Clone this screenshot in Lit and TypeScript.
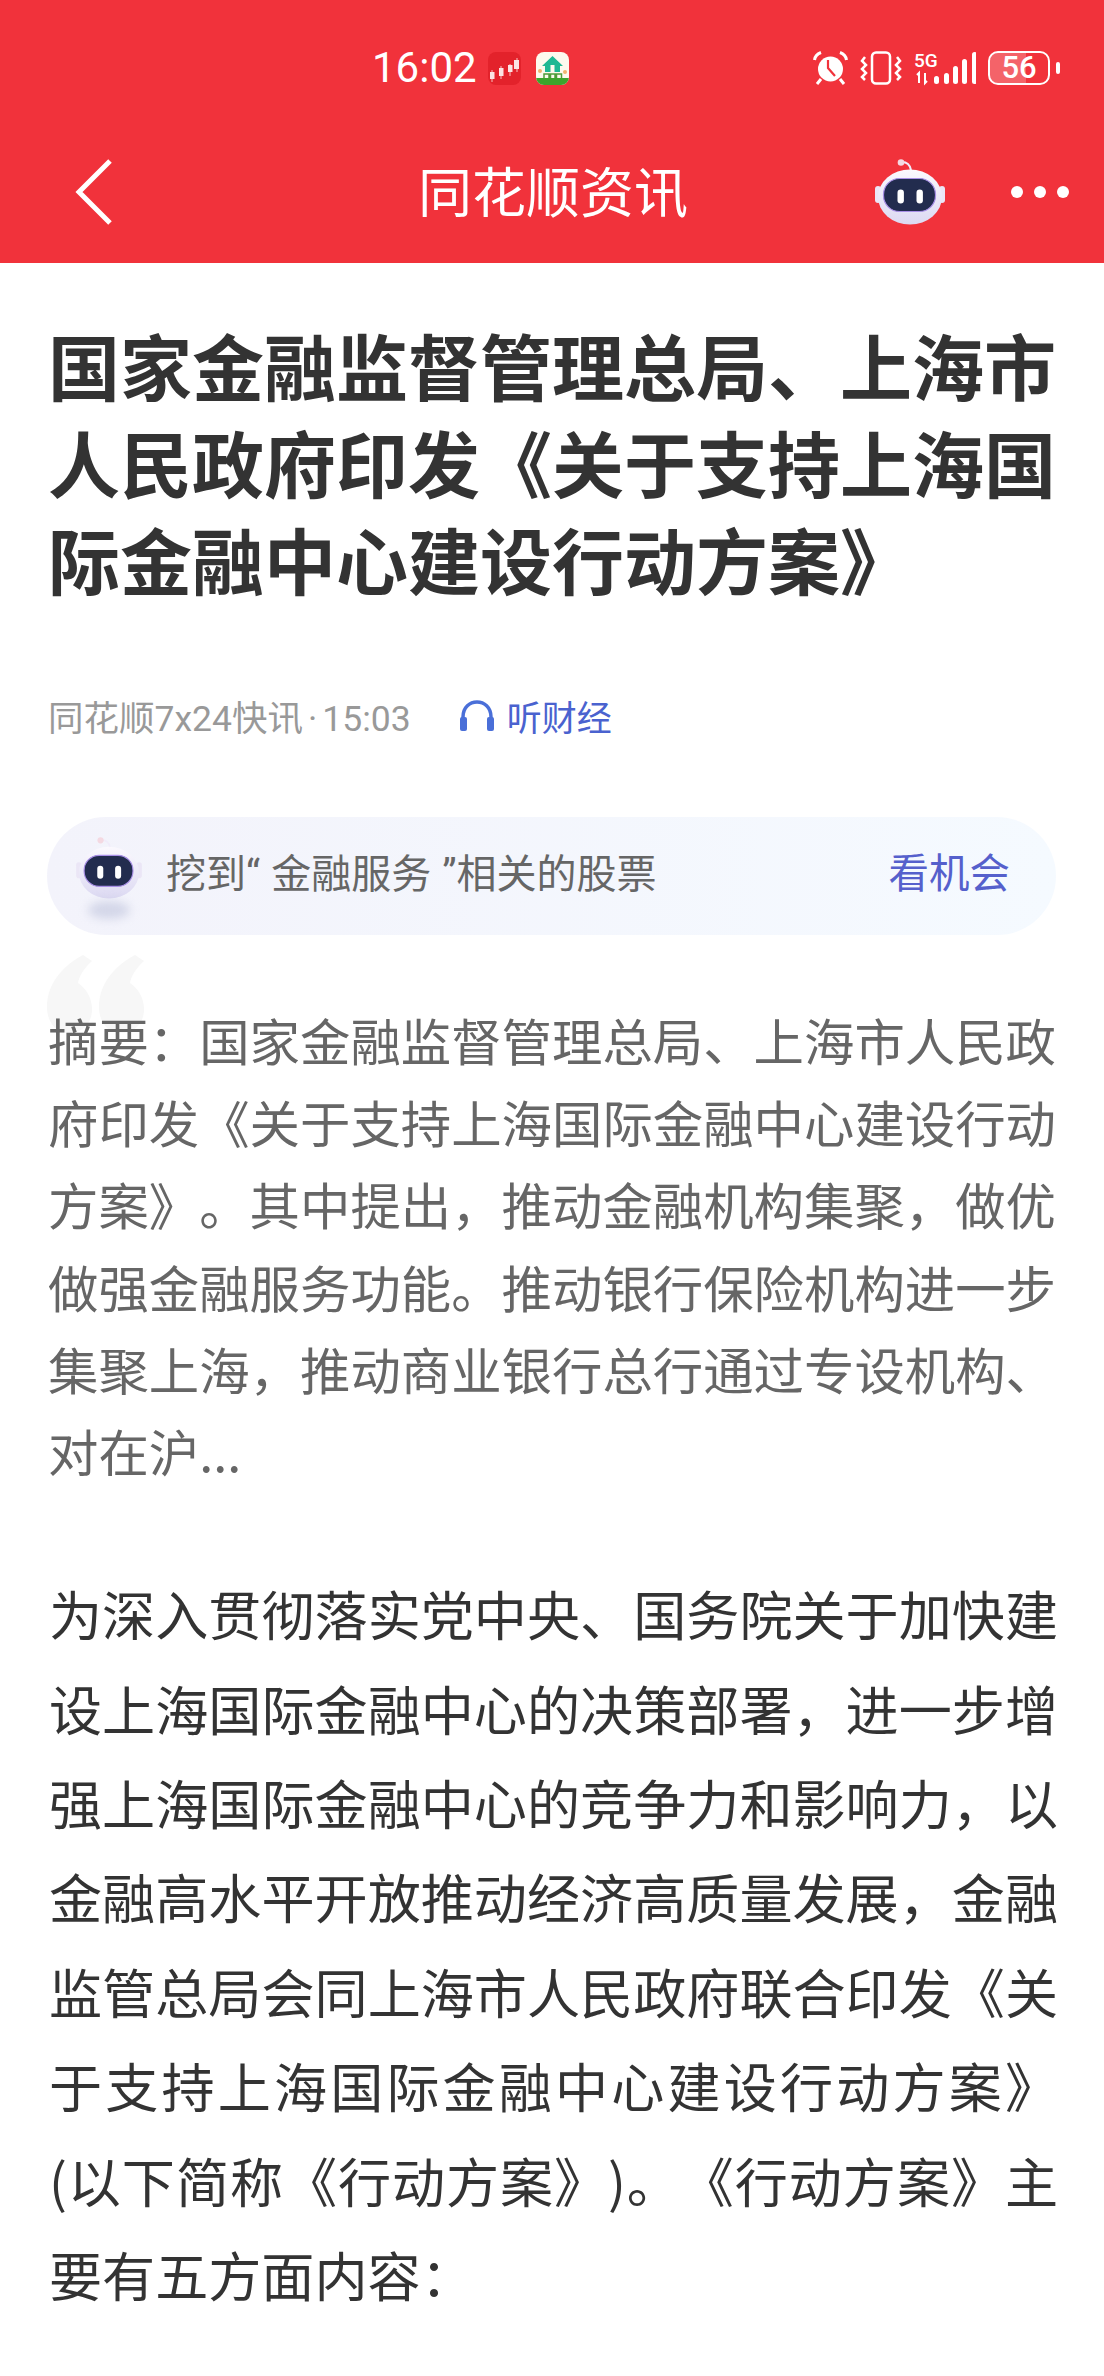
import { LitElement, html, css, svg } from 'lit'
import { customElement } from 'lit/decorators.js'

// robot mascot used in the nav bar and in the stock pill
const robot = (w: number, h: number) => html`<svg width=${w} height=${h} viewBox="0 0 70 66">
  <defs>
    <linearGradient id="shell" x1="0" y1="0" x2="0" y2="1">
      <stop offset="0" stop-color="#fbf9fe" />
      <stop offset="1" stop-color="#dcd9f2" />
    </linearGradient>
  </defs>
  <path d="M27 3 C32 3 35 6 36 11" fill="none" stroke="#f1ecfa" stroke-width="2" />
  <circle cx="26" cy="3.5" r="3.3" fill="#f4d9e2" />
  <rect x="0" y="27" width="6" height="17" rx="3" fill="#ebe6f6" />
  <rect x="64" y="27" width="6" height="17" rx="3" fill="#ebe6f6" />
  <ellipse cx="35" cy="38" rx="32" ry="27.5" fill="url(#shell)" />
  <rect x="8.5" y="19.5" width="52" height="33" rx="16" fill="#222c4e" stroke="#a88fe6" stroke-width="1.2" />
  <rect x="22.5" y="30.5" width="6.4" height="14" rx="3.2" fill="#fff" />
  <rect x="41.5" y="30.5" width="6.4" height="14" rx="3.2" fill="#fff" />
</svg>`

const signalBars = [
  [20, 24, 8],
  [30, 21, 11],
  [39, 14, 18],
  [48, 7, 25],
  [58, 0, 32],
]

const headlineLines = ['国家金融监督管理总局、上海市', '人民政府印发《关于支持上海国', '际金融中心建设行动方案》']

const summaryLines = [
  '摘要：国家金融监督管理总局、上海市人民政',
  '府印发《关于支持上海国际金融中心建设行动',
  '方案》。其中提出，推动金融机构集聚，做优',
  '做强金融服务功能。推动银行保险机构进一步',
  '集聚上海，推动商业银行总行通过专设机构、',
  '对在沪...',
]

const bodyLines = [
  '为深入贯彻落实党中央、国务院关于加快建',
  '设上海国际金融中心的决策部署，进一步增',
  '强上海国际金融中心的竞争力和影响力，以',
  '金融高水平开放推动经济高质量发展，金融',
  '监管总局会同上海市人民政府联合印发《关',
  '于支持上海国际金融中心建设行动方案》',
  '(以下简称《行动方案》)。《行动方案》主',
  '要有五方面内容：',
]

const lines = (items: string[]) => items.map((l) => html`<span class="line">${l}</span>`)

@customElement('app-root')
export class AppRoot extends LitElement {
  static styles = css`
    :host {
      display: block;
      width: 1104px;
      min-height: 2376px;
      background: #fff;
      font-family: 'Noto Sans CJK SC', sans-serif;
      text-spacing-trim: space-all;
    }
    .line {
      display: block;
      white-space: nowrap;
      text-align-last: justify;
    }
    .line:last-child {
      text-align-last: left;
    }
    .top {
      background: #f1323b;
      color: #fff;
      height: 263px;
    }
    .status {
      height: 104px;
      padding-top: 16px;
      display: flex;
      align-items: center;
    }
    .time {
      margin-left: 372px;
      width: 116px;
      font: 400 42px/1 Roboto, sans-serif;
    }
    .app-icon {
      width: 33px;
      height: 33px;
      border-radius: 8px;
      margin-right: 15px;
      display: block;
    }
    .status-right {
      margin-left: auto;
      margin-right: 44px;
      display: flex;
      align-items: center;
      gap: 12px;
    }
    .battery {
      position: relative;
      width: 62px;
      height: 34px;
      border: 2.5px solid #fff;
      border-radius: 10px;
      box-sizing: border-box;
      text-align: center;
      font: 500 31px/29px Roboto, sans-serif;
    }
    .battery i {
      position: absolute;
      left: 0;
      top: 0;
      bottom: 0;
      width: 62%;
      border-radius: 7px 0 0 7px;
      background: rgba(255, 255, 255, 0.24);
    }
    .battery span {
      position: relative;
    }
    .tip {
      width: 4px;
      height: 12px;
      margin-left: -6px;
      border-radius: 2px;
      background: #fff;
    }
    .nav {
      height: 143px;
      display: grid;
      grid-template-columns: 1fr auto 1fr;
      align-items: center;
    }
    .back {
      margin-left: 74px;
      display: block;
    }
    .nav-title {
      font-size: 54px;
      line-height: 1;
      margin: -3px 0 0 2px;
    }
    .nav-right {
      display: flex;
      align-items: center;
      justify-content: flex-end;
      padding-right: 35px;
      gap: 66px;
    }
    .dots {
      display: flex;
      gap: 11px;
    }
    .dots i {
      width: 12px;
      height: 12px;
      border-radius: 50%;
      background: #fff;
    }
    .headline {
      margin: 52px 48px 0;
      font-size: 72px;
      line-height: 97px;
      font-weight: 700;
      color: #333;
    }
    .meta {
      margin: 84px 0 0 48px;
      display: flex;
      align-items: center;
      height: 50px;
      font-family: Roboto, 'Noto Sans CJK SC', sans-serif;
      font-size: 35.5px;
      color: #999;
    }
    .dot {
      padding: 0 5px;
    }
    .listen {
      margin-left: 48px;
      display: flex;
      align-items: center;
      gap: 12px;
      font-size: 35px;
      color: #4a62cf;
    }
    .pill {
      margin: 77px 48px 0 47px;
      height: 118px;
      border-radius: 59px;
      background: linear-gradient(90deg, #f3f3fb, #f5faff);
      display: flex;
      align-items: center;
      padding: 0 46px 0 29px;
      font-family: Roboto, 'Noto Sans CJK SC', sans-serif;
      font-size: 40px;
      color: #666;
    }
    .pill-text {
      margin: -11px 0 0 -2px;
    }
    .q-open {
      padding-right: 11px;
    }
    .q-close {
      padding-left: 11px;
    }
    .pill-robot {
      position: relative;
      display: flex;
      margin: -16px 26px 0 0;
    }
    .pill-robot::after {
      content: '';
      position: absolute;
      left: 12px;
      bottom: -20px;
      width: 42px;
      height: 18px;
      border-radius: 50%;
      background: rgba(190, 195, 220, 0.6);
      filter: blur(5px);
    }
    .pill-action {
      margin: -11px 0 0 auto;
      font-size: 40.5px;
      color: #5560cc;
    }
    .summary {
      position: relative;
      margin: 64px 48px 0;
      font-size: 50.4px;
      line-height: 82.2px;
      color: #666;
    }
    .quote {
      position: absolute;
      left: -1px;
      top: -44px;
      fill: #f7f7f7;
    }
    .summary p {
      position: relative;
      margin: 0;
    }
    .body {
      margin: 74px 46px 0 49px;
      font-size: 53.1px;
      line-height: 94.4px;
      color: #333;
    }
    .signal {
      margin: -2px 0;
    }
  `

  private renderStatus() {
    return html`<div class="status">
      <span class="time">16:02</span>
      <svg class="app-icon" viewBox="0 0 33 33">
        <rect width="33" height="33" fill="#e3222b" />
        <path d="M4 18 V30 M13 14 V27 M22 12 V24 M29 6 V20" stroke="#f3a6a6" stroke-width="1.2" />
        <rect x="2" y="20" width="4.5" height="7" fill="#fbe3e3" />
        <rect x="11" y="16" width="4.5" height="8" fill="#fbe3e3" />
        <rect x="20" y="13" width="4.5" height="7" fill="#fbe3e3" />
        <rect x="26" y="8" width="5" height="9" fill="#fbe3e3" />
      </svg>
      <svg class="app-icon" viewBox="0 0 33 33">
        <rect width="33" height="33" fill="#fdf9ee" />
        <rect y="26" width="33" height="7" fill="#3da42c" />
        <path d="M16.5 4 L27 14 H24 V20 H9 V14 H6 Z" fill="#1fb893" />
        <rect x="14.5" y="13" width="4" height="7" fill="#fdf9ee" />
        <path d="M8 26 V22 H13 V26 M14.5 26 V22 H19 V26 M20.5 26 V22 H25.5 V26" fill="none" stroke="#4f9c3a" stroke-width="1.5" />
        <circle cx="4" cy="19" r="2" fill="#f0b470" />
        <circle cx="29" cy="20" r="2" fill="#f0b470" />
      </svg>
      <div class="status-right">
        <svg width="35" height="34" viewBox="0 0 35 34">
          <circle cx="17.5" cy="18" r="12.5" fill="#fff" />
          <path d="M15 9 V17 L22 25" fill="none" stroke="#f1323b" stroke-width="2.2" />
          <path d="M1.5 9 C2 5 4 3 8 1.5 M33.5 9 C33 5 31 3 27 1.5 M8 28 L4 33 M27 28 L31 33" fill="none" stroke="#fff" stroke-width="3" />
        </svg>
        <svg width="42" height="34" viewBox="0 0 42 34" fill="none" stroke="#fff" stroke-width="2.5">
          <rect x="12" y="1.5" width="18" height="31" rx="4" />
          <path d="M5 6 L2 10 L6 14 L2 18 L6 22 L2 26 L5 29" />
          <path d="M37 6 L40 10 L36 14 L40 18 L36 22 L40 26 L37 29" />
        </svg>
        <svg class="signal" width="62" height="38" viewBox="0 -2 62 38">
          <text x="0" y="16" font-family="Roboto" font-size="19" font-weight="500" fill="#fff">5G</text>
          <path d="M3 24 L5 22 V32 M11 22 V32 L13 30" fill="none" stroke="#fff" stroke-width="2" />
          ${signalBars.map(([x, y, h]) => svg`<rect x=${x} y=${y + 1} width="5" height=${h} rx="2.5" fill="#fff" />`)}
        </svg>
        <div class="battery"><i></i><span>56</span></div>
        <div class="tip"></div>
      </div>
    </div>`
  }

  private renderNav() {
    return html`<div class="nav">
      <svg class="back" width="40" height="68" viewBox="0 0 40 68">
        <path d="M36 3 L5 34 L36 65" fill="none" stroke="#fff" stroke-width="5" />
      </svg>
      <div class="nav-title">同花顺资讯</div>
      <div class="nav-right">
        ${robot(70, 66)}
        <div class="dots"><i></i><i></i><i></i></div>
      </div>
    </div>`
  }

  render() {
    return html`
      <div class="top">${this.renderStatus()} ${this.renderNav()}</div>
      <div class="headline">${lines(headlineLines)}</div>
      <div class="meta">
        <span>同花顺7x24快讯<span class="dot">·</span>15:03</span>
        <span class="listen">
          <svg width="36" height="32" viewBox="0 0 36 32">
            <path d="M4 30 V18 C4 -2 32 -2 32 18 V30" fill="none" stroke="#4a6fd8" stroke-width="3.5" />
            <rect x="1" y="18" width="7" height="14" rx="2" fill="#4a6fd8" />
            <rect x="28" y="18" width="7" height="14" rx="2" fill="#4a6fd8" />
          </svg>
          听财经
        </span>
      </div>
      <div class="pill">
        <span class="pill-robot">${robot(66, 62)}</span>
        <span class="pill-text">挖到<span class="q-open">“</span>金融服务<span class="q-close">”</span>相关的股票</span>
        <span class="pill-action">看机会</span>
      </div>
      <div class="summary">
        <svg class="quote" width="97" height="78" viewBox="0 0 97 78">
          <path d="M36 0 L45 6 C36 14 32 22 31 28 C40 34 45 44 45 54 C45 68 36 78 22 78 C8 78 0 66 0 52 C0 30 14 12 36 0 Z" />
          <path transform="translate(52 0)" d="M36 0 L45 6 C36 14 32 22 31 28 C40 34 45 44 45 54 C45 68 36 78 22 78 C8 78 0 66 0 52 C0 30 14 12 36 0 Z" />
        </svg>
        <p>${lines(summaryLines)}</p>
      </div>
      <div class="body">${lines(bodyLines)}</div>
    `
  }
}
